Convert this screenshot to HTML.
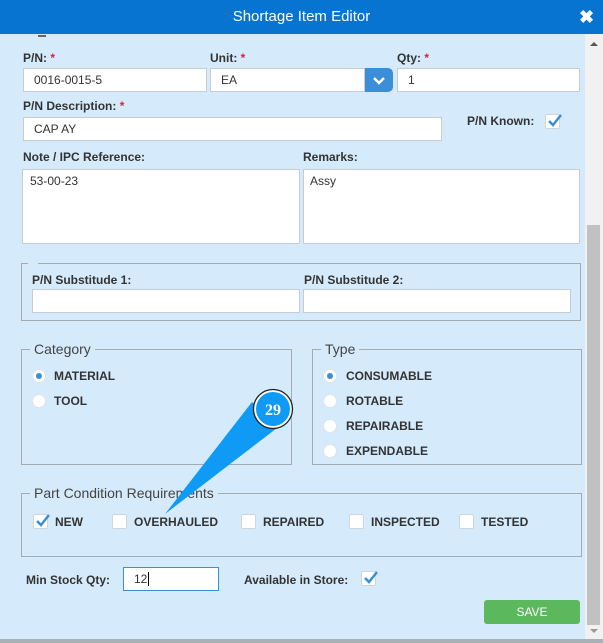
<!DOCTYPE html>
<html><head><meta charset="utf-8"><style>
*{box-sizing:border-box;margin:0;padding:0}
body{width:603px;height:643px;overflow:hidden;background:#d5ebfb;font-family:"Liberation Sans",Arial,sans-serif;position:relative;color:#333}
.a{position:absolute}
.hdr{left:0;top:0;width:603px;height:34px;background:#0674d0;color:#fff;font-size:15px;text-align:center;line-height:34px}
.lbl{font-size:12px;font-weight:bold;color:#333}
.req{color:#e0203a}
.in{background:#fff;border:1px solid #c6ccd2;font-size:12px;padding-left:10px;line-height:22px;color:#333}
.fs{border:1px solid #a3acb5}
.lg{font-size:14px;color:#444;background:#d5ebfb;padding:0 4px}
.opt{font-size:12px;font-weight:bold;color:#333}
.rad{width:14px;height:14px;border-radius:50%;background:#fff;border:1px solid #dfe3e6}
.rad.on::after{content:"";position:absolute;left:3px;top:3px;width:6px;height:6px;border-radius:50%;background:#3a8fd8}
.cb{width:15px;height:15px;background:#fff;border:1px solid #cfd5da;border-radius:2px}
.ck{position:absolute;left:1px;top:-2px}
</style></head><body>
<div class="a hdr">Shortage Item Editor</div>
<div class="a" style="left:579px;top:7px;color:#fff;font-size:18px;font-weight:bold">✖</div>
<div class="a" style="left:585px;top:34px;width:18px;height:606px;background:#f1f1f1"></div>
<div class="a" style="left:587px;top:225px;width:13px;height:400px;background:#c1c1c1"></div>
<div class="a" style="left:590px;top:42px;width:0;height:0;border-left:4px solid transparent;border-right:4px solid transparent;border-bottom:4px solid #555"></div>
<div class="a" style="left:590px;top:629px;width:0;height:0;border-left:4px solid transparent;border-right:4px solid transparent;border-top:4px solid #999"></div>
<div class="a" style="left:0;top:639px;width:603px;height:4px;background:#a9b0b6"></div>
<div class="a" style="left:38px;top:35px;width:8px;height:2px;background:#666"></div>

<div class="a lbl" style="left:23px;top:51px">P/N: <span class="req">*</span></div>
<div class="a lbl" style="left:210px;top:51px">Unit: <span class="req">*</span></div>
<div class="a lbl" style="left:397px;top:51px">Qty: <span class="req">*</span></div>
<div class="a in" style="left:23px;top:68px;width:184px;height:24px">0016-0015-5</div>
<div class="a in" style="left:210px;top:68px;width:155px;height:24px">EA</div>
<div class="a" style="left:365px;top:68px;width:28px;height:24px;background:#3a8fd8;border-radius:0 5px 5px 0"><svg width="28" height="24"><path d="M9 10l5 5 5-5" stroke="#fff" stroke-width="2.5" fill="none"/></svg></div>
<div class="a in" style="left:397px;top:68px;width:183px;height:24px">1</div>

<div class="a lbl" style="left:23px;top:99px">P/N Description: <span class="req">*</span></div>
<div class="a in" style="left:23px;top:117px;width:419px;height:24px">CAP AY</div>
<div class="a lbl" style="left:467px;top:114px">P/N Known:</div>
<div class="a cb" style="left:545px;top:114px"><svg class="ck" width="16" height="16"><path d="M2 8l4 4 8-10" stroke="#3a8fd8" stroke-width="2.5" fill="none"/></svg></div>

<div class="a lbl" style="left:23px;top:150px">Note / IPC Reference:</div>
<div class="a lbl" style="left:303px;top:150px">Remarks:</div>
<div class="a in" style="left:22px;top:169px;width:278px;height:75px;padding-left:7px;padding-top:3px;line-height:16px">53-00-23</div>
<div class="a in" style="left:303px;top:169px;width:277px;height:75px;padding-left:6px;padding-top:3px;line-height:16px">Assy</div>

<div class="a fs" style="left:21px;top:263px;width:560px;height:58px"></div>
<div class="a" style="left:28px;top:260px;width:10px;height:6px;background:#d5ebfb"></div>
<div class="a lbl" style="left:32px;top:273px">P/N Substitude 1:</div>
<div class="a lbl" style="left:304px;top:273px">P/N Substitude 2:</div>
<div class="a in" style="left:32px;top:289px;width:268px;height:24px"></div>
<div class="a in" style="left:303px;top:289px;width:268px;height:24px"></div>

<div class="a fs" style="left:21px;top:349px;width:271px;height:116px"></div>
<div class="a lg" style="left:30px;top:341px">Category</div>
<div class="a rad on" style="left:32px;top:369px"></div><div class="a opt" style="left:54px;top:369px">MATERIAL</div>
<div class="a rad" style="left:32px;top:394px"></div><div class="a opt" style="left:54px;top:394px">TOOL</div>

<div class="a fs" style="left:312px;top:349px;width:270px;height:116px"></div>
<div class="a lg" style="left:321px;top:341px">Type</div>
<div class="a rad on" style="left:323px;top:369px"></div><div class="a opt" style="left:346px;top:369px">CONSUMABLE</div>
<div class="a rad" style="left:323px;top:394px"></div><div class="a opt" style="left:346px;top:394px">ROTABLE</div>
<div class="a rad" style="left:323px;top:419px"></div><div class="a opt" style="left:346px;top:419px">REPAIRABLE</div>
<div class="a rad" style="left:323px;top:444px"></div><div class="a opt" style="left:346px;top:444px">EXPENDABLE</div>

<div class="a fs" style="left:21px;top:493px;width:561px;height:64px"></div>
<div class="a lg" style="left:30px;top:485px">Part Condition Requirements</div>
<div class="a cb" style="left:33px;top:514px"><svg class="ck" width="16" height="16"><path d="M2 8l4 4 8-10" stroke="#3a8fd8" stroke-width="2.5" fill="none"/></svg></div><div class="a opt" style="left:55px;top:515px">NEW</div>
<div class="a cb" style="left:112px;top:514px"></div><div class="a opt" style="left:134px;top:515px">OVERHAULED</div>
<div class="a cb" style="left:241px;top:514px"></div><div class="a opt" style="left:263px;top:515px">REPAIRED</div>
<div class="a cb" style="left:349px;top:514px"></div><div class="a opt" style="left:371px;top:515px">INSPECTED</div>
<div class="a cb" style="left:459px;top:514px"></div><div class="a opt" style="left:481px;top:515px">TESTED</div>

<div class="a lbl" style="left:26px;top:573px">Min Stock Qty:</div>
<div class="a in" style="left:123px;top:567px;width:96px;height:24px;border-color:#3a8fd8">12<span style="border-left:1px solid #000;margin-left:1px"></span></div>
<div class="a lbl" style="left:244px;top:573px">Available in Store:</div>
<div class="a cb" style="left:361px;top:571px"><svg class="ck" width="16" height="16"><path d="M2 8l4 4 8-10" stroke="#3a8fd8" stroke-width="2.5" fill="none"/></svg></div>

<div class="a" style="left:484px;top:600px;width:96px;height:24px;background:#5cb85c;border-radius:3px;color:#fff;font-size:12px;text-align:center;line-height:24px">SAVE</div>

<svg class="a" style="left:0;top:0" width="603" height="643">
<path d="M252 402 L165 514 L277 428 Z" fill="#0f9af5"/>
<circle cx="273" cy="409" r="19.5" fill="#fff" stroke="#222" stroke-width="1.3"/>
<circle cx="273" cy="409" r="17" fill="#0f9af5"/>
<text x="273" y="415" text-anchor="middle" font-family="Liberation Serif,serif" font-weight="bold" font-size="16" fill="#fff">29</text>
</svg>
</body></html>
